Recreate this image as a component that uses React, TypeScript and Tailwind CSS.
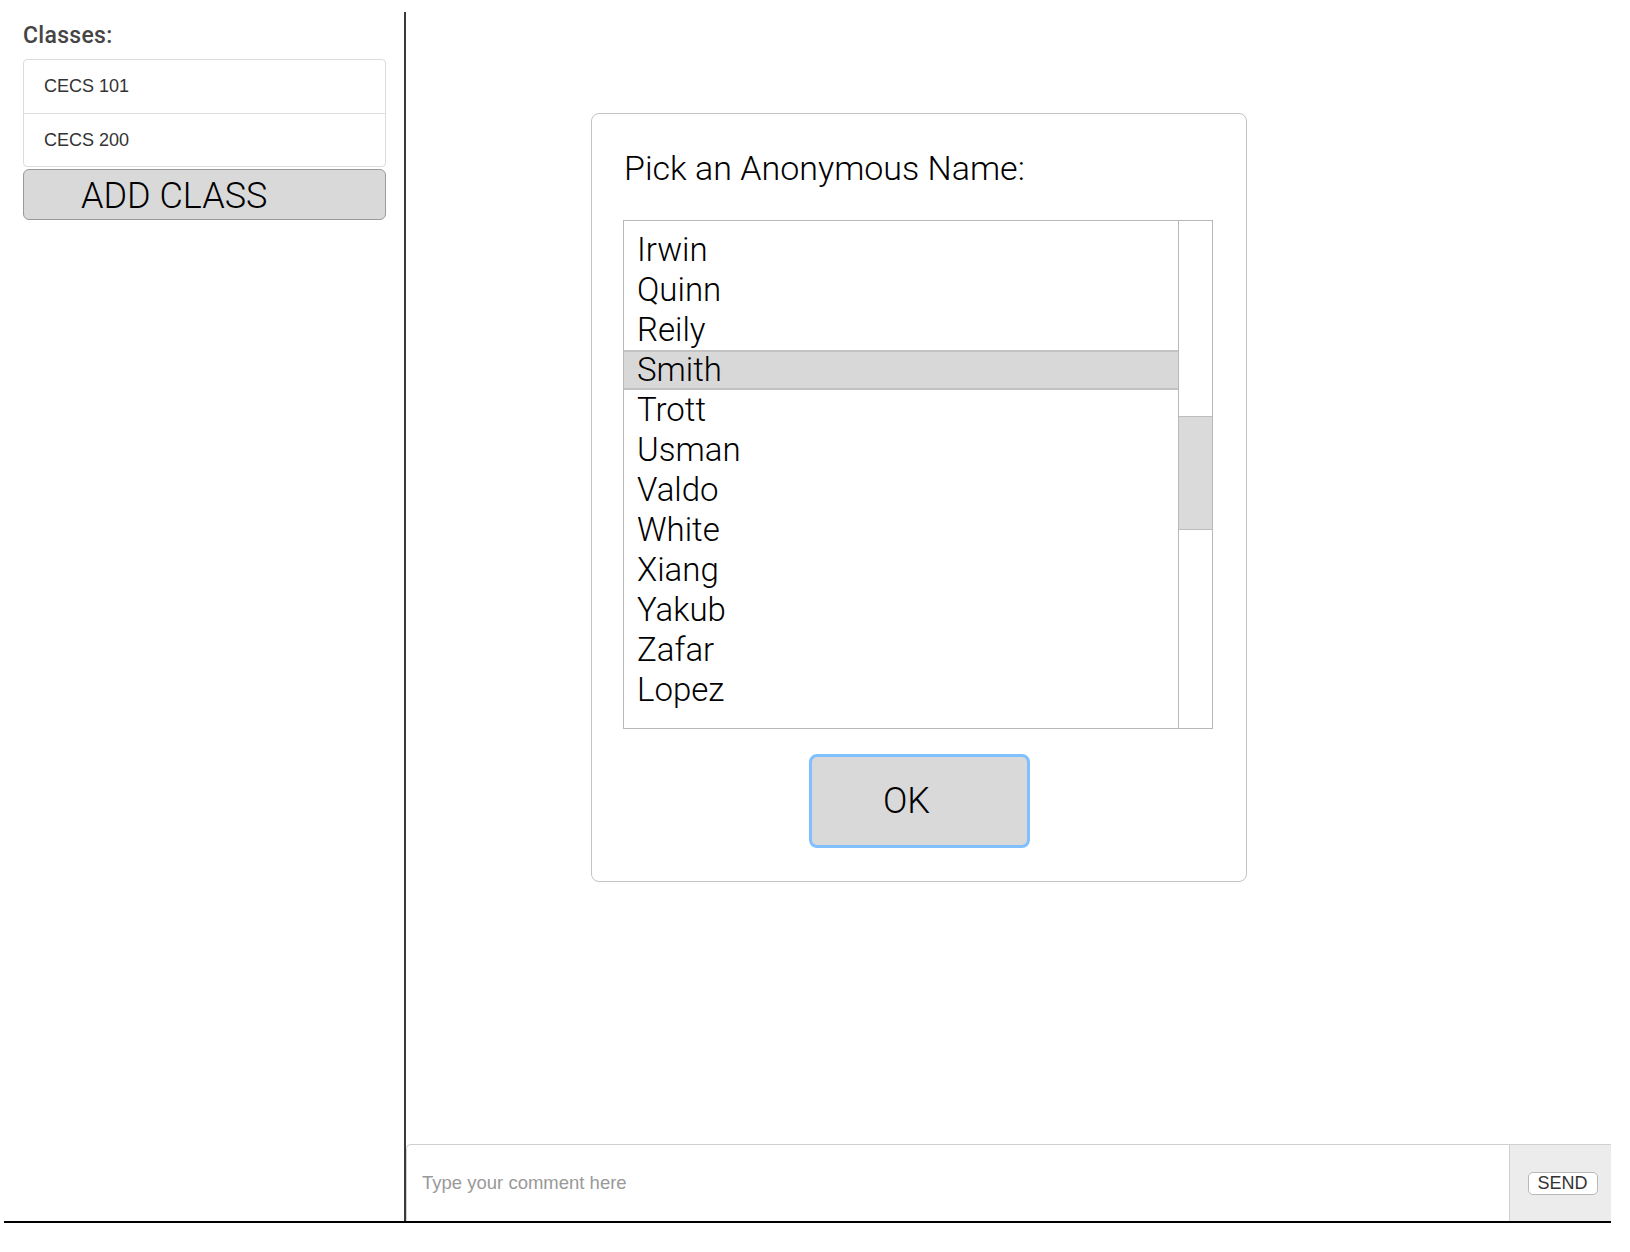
import React from "react";

const classes = ["CECS 101", "CECS 200"];
const names = ["Irwin", "Quinn", "Reily", "Smith", "Trott", "Usman", "Valdo", "White", "Xiang", "Yakub", "Zafar", "Lopez"];

export default function App() {
  const selected = "Smith";

  return (
    <div className="w-[1630px] h-[1252px] bg-white pt-[12px] pl-[4px] font-['Liberation_Sans',Arial,sans-serif]">
      <div className="flex w-[1607px] h-[1211px] border-b-2 border-black">
        {/* Sidebar */}
        <aside className="w-[402px] shrink-0 border-r-2 border-[#3a3a3a] pl-[19px] pr-[18px] pt-[11px]">
          <h2 className="font-['Roboto',sans-serif] text-[23px] leading-[26px] font-medium text-[#454545] tracking-[0.3px]">Classes:</h2>
          <ul className="mt-[10px] border border-[#dcdcdc] rounded-[4px] bg-white">
            {classes.map((c, i) => (
              <li
                key={c}
                className={`h-[53px] flex items-center pl-[20px] text-[18px] text-[#333] ${
                  i > 0 ? "border-t border-[#dcdcdc]" : ""
                }`}
              >
                {c}
              </li>
            ))}
          </ul>
          <button className="mt-[2px] w-full h-[51px] flex items-center pl-[57px] pt-[3px] bg-[#d9d9d9] border border-[#9a9a9a] rounded-[6px] font-['Roboto',sans-serif] font-light text-[36px] text-black">
            ADD CLASS
          </button>
        </aside>

        {/* Main */}
        <main className="flex-1 flex flex-col">
          <div className="ml-[185px] mt-[101px] w-[656px] border border-[#c4c4c4] rounded-[8px] bg-white pt-[34px] pb-[33px] pl-[31px] pr-[33px] font-['Roboto',sans-serif] font-light">
            <p className="pl-[1px] text-[34px] leading-[40px] text-black">Pick an Anonymous Name:</p>

            <div className="mt-[32px] h-[509px] flex border border-[#b8b8b8] bg-white">
              <div className="flex-1 pt-[9px]">
                {names.map((n) => (
                  <div
                    key={n}
                    className={`h-[40px] flex items-center pl-[13px] text-[33px] text-black ${
                      n === selected ? "bg-[#d8d8d8] border-y-2 border-[#c2c2c2]" : ""
                    }`}
                  >
                    {n}
                  </div>
                ))}
              </div>
              <div className="w-[34px] border-l border-[#b8b8b8] pt-[195px]">
                <div className="h-[114px] bg-[#dadada] border-y border-[#bdbdbd]" />
              </div>
            </div>

            <div className="mt-[25px] flex justify-center pl-[2px]">
              <button className="w-[221px] h-[94px] pr-[25px] bg-[#d9d9d9] border-[3px] border-[#80c0ff] rounded-[8px] text-[36px] text-black">
                OK
              </button>
            </div>
          </div>

          {/* Comment bar */}
          <div className="mt-auto h-[77px] flex">
            <div className="flex-1 flex items-center pl-[15px] border-t border-l border-[#d0d0d0] rounded-tl-[5px] bg-white">
              <span className="text-[18.5px] text-[#999]">Type your comment here</span>
            </div>
            <div className="w-[102px] flex items-center justify-center bg-[#ececec] border-t border-l border-[#d0d0d0]">
              <button className="w-[70px] h-[23px] ml-[4px] flex items-center justify-center bg-white border border-[#b8b8b8] rounded-[5px] text-[18px] leading-none text-[#333]">
                SEND
              </button>
            </div>
          </div>
        </main>
      </div>
    </div>
  );
}
